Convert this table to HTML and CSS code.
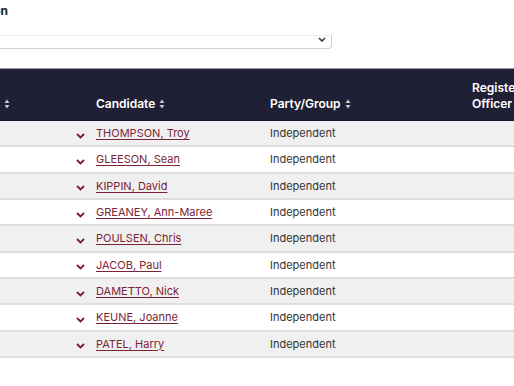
FILE: index.html
```html
<html>
  <head>
    <title>Candidates</title>
    <link rel="stylesheet" href="styles.css">
  </head>
  <body>
    <section class="page">
      <div class="field">
        <label class="field-label">Election</label>
        <div class="select">
          <svg class="select-arrow" width="8" height="5" viewBox="0 0 8 5">
            <path d="M1 1 L4 4 L7 1" fill="none" stroke="#333" stroke-width="1.5" />
          </svg>
        </div>
      </div>

      <div class="table">
        <div class="row head">
          <div class="cell first">Electorate <span class="sort"></span></div>
          <div class="cell"></div>
          <div class="cell">Candidate <span class="sort"></span></div>
          <div class="cell">Party/Group <span class="sort"></span></div>
          <div class="cell">Registered<br />Officer <span class="sort"></span></div>
        </div>
      </div>
    </section>

    <template id="sort-icon">
      <svg width="6" height="10" viewBox="0 0 6 10">
        <path d="M3 0.5 L5.5 4 L0.5 4 Z M3 9.5 L5.5 6 L0.5 6 Z" fill="#c9c9d2" />
      </svg>
    </template>

    <script>
      const candidates = [
        "THOMPSON, Troy",
        "GLEESON, Sean",
        "KIPPIN, David",
        "GREANEY, Ann-Maree",
        "POULSEN, Chris",
        "JACOB, Paul",
        "DAMETTO, Nick",
        "KEUNE, Joanne",
        "PATEL, Harry",
      ];

      const table = document.querySelector(".table");
      const sortIcon = document.getElementById("sort-icon");

      for (const sort of document.querySelectorAll(".sort")) {
        sort.append(sortIcon.content.cloneNode(true));
      }

      for (const name of candidates) {
        const row = document.createElement("div");
        row.className = "row";
        row.innerHTML = `
          <div class="cell"></div>
          <div class="cell toggle">
            <svg width="9" height="6" viewBox="0 0 9 6">
              <path d="M1 1 L4.5 4.5 L8 1" fill="none" stroke="#7a1c2c" stroke-width="1.8" />
            </svg>
          </div>
          <div class="cell"><a href="#">${name}</a></div>
          <div class="cell">Independent</div>
          <div class="cell"></div>
        `;
        table.append(row);
      }
    </script>
  </body>
</html>
```

FILE: styles.css
```css
html,
body {
  padding: 0;
  margin: 0;
  font-family: Inter, "Noto Sans", sans-serif;
  background: #fff;
  color: #333;
  overflow: hidden;
}

.page {
  width: 514px;
  height: 386px;
}

.field {
  display: flex;
  flex-direction: column;
  margin-left: -120px;
}

.field-label {
  width: 128px;
  text-align: right;
  padding-top: 3px;
  height: 35px;
  box-sizing: border-box;
  font-size: 12px;
  font-weight: 700;
  color: #222;
}

.select {
  width: 452px;
  height: 14px;
  box-sizing: border-box;
  border-top: 1px solid #f0f0f0;
  border-right: 1px solid #cfcfcf;
  border-bottom: 1px solid #cfcfcf;
  border-radius: 0 0 4px 0;
  display: flex;
  justify-content: flex-end;
  padding: 1px 5px 0 0;
}

.table {
  margin-top: 19px;
  margin-left: -100px;
  border-top: 1px solid #9a9a9a;
}

.row {
  display: grid;
  grid-template-columns: 170px 26px 174px 202px 160px;
  height: 26.33px;
  box-sizing: border-box;
  border-bottom: 2px solid #dedede;
  font-size: 11px;
  align-items: center;
}

.row:nth-child(even) {
  background: #f0f0f0;
}

.row.head {
  height: 52px;
  background: #1f2036;
  border-bottom: 1px solid #14142a;
  color: #fff;
  font-size: 12px;
  font-weight: 600;
  align-items: end;
  padding-bottom: 8px;
  line-height: 16px;
}

.cell.first {
  text-align: right;
  padding-right: 60px;
  white-space: nowrap;
}

.sort svg {
  vertical-align: -1px;
  margin-left: 1px;
}

.toggle {
  display: flex;
  justify-content: center;
  padding: 5px 5px 0 0;
}

.cell a {
  color: #7b2537;
  text-decoration: underline;
  text-underline-offset: 2px;
}
```
